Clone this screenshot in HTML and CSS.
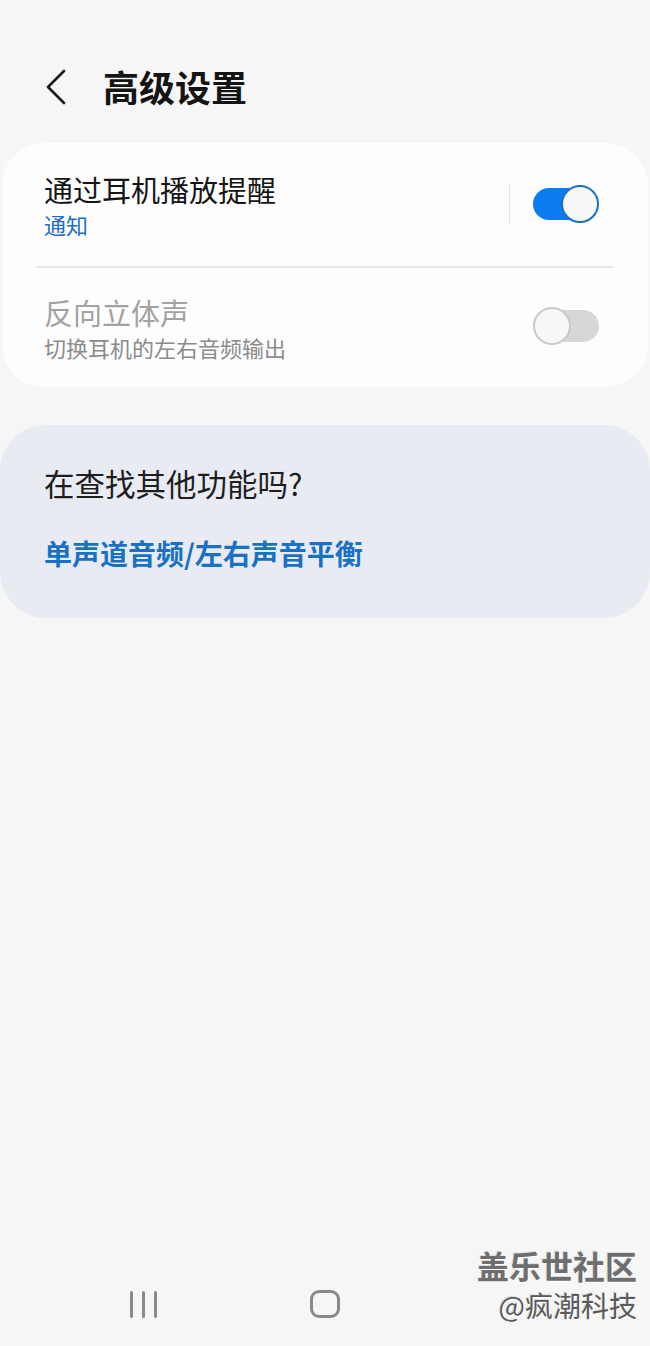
FILE: index.html
```html
<!DOCTYPE html>
<html lang="zh-CN">
<head>
<meta charset="utf-8">
<title>高级设置</title>
<link rel="stylesheet" href="styles.css">
</head>
<body>
<div class="page">
  <header class="header">
    <svg class="back" width="24" height="36" viewBox="0 0 24 36"><path d="M20 2 L4 18 L20 34" fill="none" stroke="#1c1c1c" stroke-width="2.6" stroke-linecap="round" stroke-linejoin="round"/></svg>
    <h1 class="title">高级设置</h1>
  </header>

  <section class="card">
    <div class="row row-first">
      <div class="texts">
        <div class="row-title">通过耳机播放提醒</div>
        <div class="row-sub sub-blue">通知</div>
      </div>
      <div class="vsep"></div>
      <div class="toggle on"><span class="track"></span><span class="thumb"></span></div>
    </div>
    <div class="divider"></div>
    <div class="row row-second">
      <div class="texts">
        <div class="row-title dim">反向立体声</div>
        <div class="row-sub sub-gray">切换耳机的左右音频输出</div>
      </div>
      <div class="toggle off"><span class="track"></span><span class="thumb"></span></div>
    </div>
  </section>

  <section class="card suggest">
    <div class="suggest-title">在查找其他功能吗?</div>
    <div class="suggest-link">单声道音频/左右声音平衡</div>
  </section>

  <nav class="navbar">
    <div class="nav-slot">
      <span class="recent"><i></i><i></i><i></i></span>
    </div>
    <div class="nav-slot"><span class="home"></span></div>
    <div class="nav-slot"></div>
  </nav>

  <div class="watermark">
    <div class="wm-1">盖乐世社区</div>
    <div class="wm-2">@疯潮科技</div>
  </div>
</div>
</body>
</html>
```

FILE: styles.css
```css
* { box-sizing: border-box; }
html, body { margin: 0; padding: 0; }
body {
  background: #f6f6f6;
  font-family: "Noto Sans CJK SC", "Noto Sans", sans-serif;
  color: #111;
}
.page {
  position: relative;
  width: 650px;
  min-height: 1346px;
  display: flex;
  flex-direction: column;
}
.header {
  display: flex;
  align-items: center;
  padding: 63px 0 0 44px;
  height: 109px;
}
.back { display: block; flex: none; margin-top: 2px; }
.title {
  margin: 0 0 0 35px;
  font-size: 36px;
  line-height: 46px;
  font-weight: 700;
  color: #141414;
}
.card {
  margin: 34px 2px 0;
  background: #fdfdfd;
  border-radius: 42px;
}
.row {
  display: flex;
  align-items: center;
  padding: 0 49px 0 42px;
}
.row-first { padding-top: 28px; padding-bottom: 27px; }
.row-second { padding-top: 26px; padding-bottom: 25px; }
.texts { flex: 1; display: flex; flex-direction: column; gap: 2px; }
.row-title { font-size: 29px; line-height: 36px; color: #151515; }
.row-title.dim { color: #a2a2a2; }
.row-sub { font-size: 22px; line-height: 30px; }
.sub-blue { color: #1c6fc1; }
.sub-gray { color: #8b8b8b; }
.vsep {
  width: 1px;
  height: 38px;
  background: #e3e3e3;
  margin-right: 23px;
  margin-bottom: 2px;
}
.row-first .toggle { margin-bottom: 2px; }
.row-second .toggle { margin-bottom: 4px; }
.toggle {
  position: relative;
  width: 66px;
  height: 38px;
  flex: none;
}
.track {
  position: absolute;
  left: 0; right: 0; top: 3px; bottom: 3px;
  border-radius: 16px;
}
.thumb {
  position: absolute;
  top: 0;
  width: 38px;
  height: 38px;
  border-radius: 50%;
  background: #f7f7f7;
}
.on .track { background: #0b7bf0; right: 6px; }
.on .thumb { right: 0; border: 2.5px solid #1b70cc; }
.off .track { background: #d7d7d7; left: 6px; }
.off .thumb { left: 0; border: 2px solid #c9c9c9; }
.divider {
  height: 2px;
  margin: 0 35px 0 34px;
  background: #e7e7e7;
}
.suggest {
  margin-top: 38px;
  margin-left: 0;
  margin-right: 0;
  background: #e8ecf2;
  border-radius: 46px;
  padding: 40px 44px 47px;
}
.suggest-title { font-size: 30.5px; line-height: 36px; color: #1e1e1e; }
.suggest-link {
  margin-top: 34px;
  font-size: 28px;
  line-height: 36px;
  font-weight: 700;
  color: #1a70c4;
}
.navbar {
  margin-top: auto;
  height: 84px;
  display: grid;
  grid-template-columns: repeat(3, 182px);
  justify-content: center;
  align-items: center;
}
.nav-slot { display: flex; justify-content: center; align-items: center; }
.recent { display: flex; gap: 9px; }
.recent i {
  display: block;
  width: 3px;
  height: 27px;
  border-radius: 2px;
  background: #8a8a8a;
}
.home {
  display: block;
  width: 30px;
  height: 28px;
  border: 3px solid #8a8a8a;
  border-radius: 9px;
}
.watermark {
  position: absolute;
  right: 13px;
  bottom: 21px;
  text-align: right;
  color: #6a6a6a;
  text-shadow: 1px 1px 0 #fff, -1px -1px 0 #ddd;
}
.wm-1 { font-size: 32px; line-height: 40px; font-weight: 700; color: #6e6e6e; }
.wm-2 { font-size: 28px; line-height: 40px; color: #5a5a5a; }
```
